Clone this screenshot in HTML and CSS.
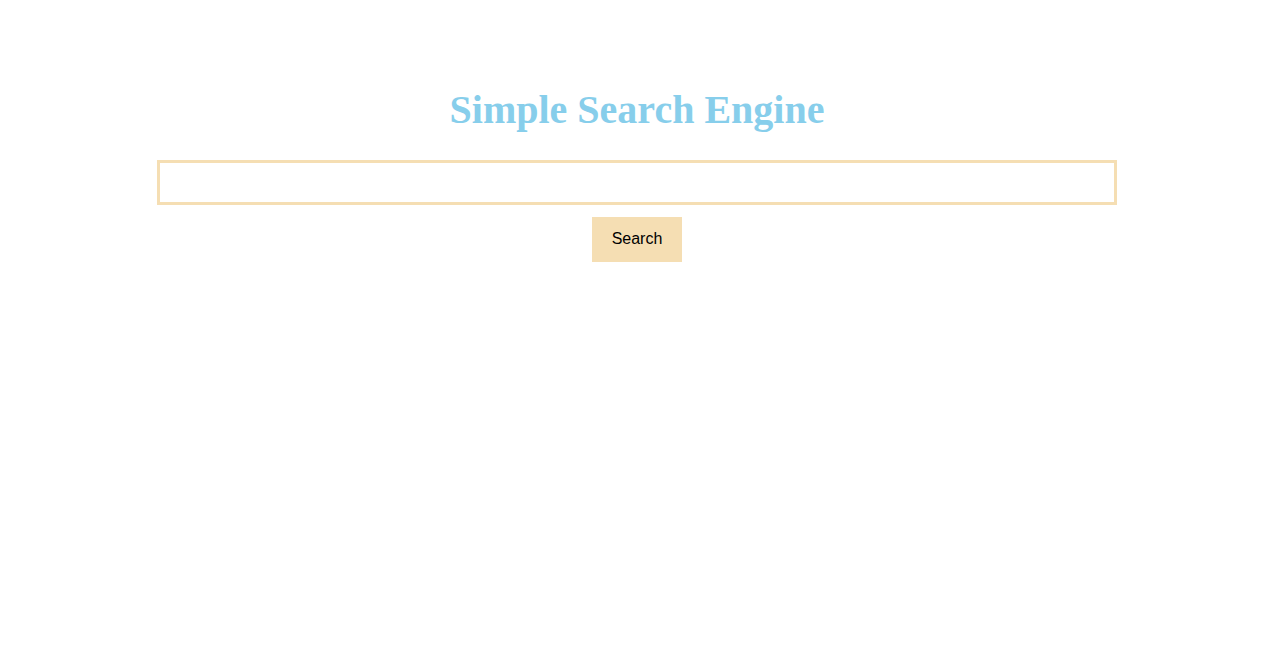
FILE: index.html
```html
<!DOCTYPE html>
<html lang="en">
<head>
<meta charset="utf-8">
<title>Simple Search Engine</title>
<link rel="stylesheet" href="styles.css">
</head>
<body>
<main class="page">
  <h1 class="title">Simple Search Engine</h1>
  <form class="search-form" onsubmit="return false;">
    <input class="search-input" type="text" aria-label="Search">
    <button class="search-button" type="submit">Search</button>
  </form>
</main>
</body>
</html>
```
FILE: styles.css
```css
html, body {
  margin: 0;
  padding: 0;
  background: #ffffff;
}

.page {
  display: flex;
  flex-direction: column;
  align-items: center;
  padding: 88px 0 0 5px;
}

.title {
  margin: 0;
  font-family: "Liberation Serif", "Times New Roman", serif;
  font-weight: bold;
  font-size: 40px;
  line-height: 44px;
  color: #87ceeb;
  text-align: center;
}

.search-form {
  margin-top: 28px;
  display: flex;
  flex-direction: column;
  align-items: center;
  gap: 12px;
}

.search-input {
  box-sizing: border-box;
  width: 960px;
  height: 45px;
  margin: 0;
  padding: 0 10px;
  border: 3px solid #f5deb3;
  border-radius: 0;
  outline: none;
  background: #ffffff;
  font-family: "Liberation Sans", Arial, sans-serif;
  font-size: 16px;
}

.search-button {
  box-sizing: border-box;
  width: 90px;
  height: 45px;
  margin: 0;
  padding: 0 0 1px;
  border: none;
  border-radius: 0;
  background: #f5deb3;
  color: #000000;
  font-family: "Liberation Sans", Arial, sans-serif;
  font-size: 16px;
  cursor: pointer;
}
```
